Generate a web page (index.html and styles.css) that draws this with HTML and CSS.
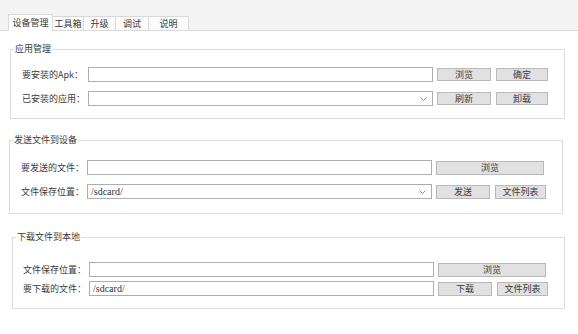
FILE: index.html
```html
<!DOCTYPE html>
<html lang="zh-CN">
<head>
    <meta charset="UTF-8">
    <title>ADB 工具</title>
    <link rel="stylesheet" href="styles.css">
</head>
<body>
    <div class="tabs">
        <div class="tab active tab-device">设备管理</div>
        <div class="tab tab-tools">工具箱</div>
        <div class="tab tab-up">升级</div>
        <div class="tab tab-debug">调试</div>
        <div class="tab tab-help">说明</div>
    </div>

    <div class="page">
        <div class="group g-app">
            <span class="group-title">应用管理</span>
            <div class="row">
                <span class="label">要安装的Apk：</span>
                <div class="field"></div>
                <button class="btn">浏览</button>
                <button class="btn btn-second">确定</button>
            </div>
            <div class="row">
                <span class="label">已安装的应用：</span>
                <div class="field combo">
                    <svg class="arrow" width="7" height="4" viewBox="0 0 7 4"><path d="M0.5 0.5 L3.5 3.5 L6.5 0.5" fill="none" stroke="#8a8a8a" stroke-width="1"/></svg>
                </div>
                <button class="btn">刷新</button>
                <button class="btn btn-second">卸载</button>
            </div>
        </div>

        <div class="group g-send">
            <span class="group-title">发送文件到设备</span>
            <div class="row">
                <span class="label">要发送的文件：</span>
                <div class="field"></div>
                <button class="btn btn-wide">浏览</button>
            </div>
            <div class="row">
                <span class="label">文件保存位置：</span>
                <div class="field combo">/sdcard/
                    <svg class="arrow" width="7" height="4" viewBox="0 0 7 4"><path d="M0.5 0.5 L3.5 3.5 L6.5 0.5" fill="none" stroke="#8a8a8a" stroke-width="1"/></svg>
                </div>
                <button class="btn">发送</button>
                <button class="btn btn-second btn-list">文件列表</button>
            </div>
        </div>

        <div class="group g-recv">
            <span class="group-title">下载文件到本地</span>
            <div class="row">
                <span class="label">文件保存位置：</span>
                <div class="field"></div>
                <button class="btn btn-wide">浏览</button>
            </div>
            <div class="row">
                <span class="label">要下载的文件：</span>
                <div class="field">/sdcard/</div>
                <button class="btn">下载</button>
                <button class="btn btn-second btn-list">文件列表</button>
            </div>
        </div>
    </div>
</body>
</html>
```

FILE: styles.css
```css
body {
    margin: 0;
    width: 578px;
    height: 334px;
    overflow: hidden;
    background: #fff;
    font-family: "Noto Sans CJK SC", sans-serif;
    font-size: 9px;
    color: #3a3a3a;
}
.tabs {
    display: flex;
    align-items: flex-end;
    height: 31px;
    padding-left: 8px;
    box-sizing: border-box;
    background: #f4f4f4;
    border-bottom: 1px solid #dadada;
}
.tab {
    height: 14px;
    line-height: 14px;
    text-align: center;
    background: #fbfbfb;
    border: 1px solid #d9d9d9;
    border-bottom: none;
    margin-left: -1px;
    box-sizing: border-box;
}
.tab.active {
    height: 17px;
    line-height: 16px;
    background: #fff;
    margin-left: 0;
    margin-bottom: -1px;
    position: relative;
}
.tab-device { width: 45px; }
.tab-tools { width: 32px; }
.tab-up { width: 33px; }
.tab-debug { width: 34px; }
.tab-help { width: 41px; }

.page {
    padding-left: 10px;
}

/* group boxes */
.group {
    position: relative;
    box-sizing: border-box;
    width: 555px;
    margin-top: 18px;
    padding: 17px 0 12px 11px;
    border: 1px solid #dcdcdc;
    display: flex;
    flex-direction: column;
    gap: 9px;
}
.group-title {
    position: absolute;
    top: -7px;
    left: 3px;
    padding: 0 1px;
    line-height: 12px;
    background: #fff;
}
.g-send {
    width: 554px;
    margin-top: 21px;
    margin-left: -1px;
    padding-top: 19px;
    padding-bottom: 14px;
}
.g-recv {
    width: 553px;
    margin-top: 23px;
    margin-left: 2px;
    padding: 24px 0 12px 10px;
    gap: 4px;
}

.row {
    display: flex;
    align-items: center;
    height: 15px;
}
.label {
    width: 66px;
    flex: none;
    white-space: nowrap;
}
.field {
    position: relative;
    width: 345px;
    height: 15px;
    flex: none;
    box-sizing: border-box;
    margin-right: 4px;
    padding-left: 3px;
    border: 1px solid #adadad;
    background: #fff;
    display: flex;
    align-items: center;
    font-family: "Liberation Serif", serif;
    font-size: 10px;
    color: #333;
}
.combo .arrow {
    position: absolute;
    right: 5px;
    top: 5px;
}
.btn {
    width: 54px;
    height: 13px;
    flex: none;
    box-sizing: border-box;
    padding: 0;
    border: 1px solid #b9b9b9;
    background: #e1e1e1;
    font-family: inherit;
    font-size: 9px;
    line-height: 11px;
    color: #3a3a3a;
}
.g-send .btn, .g-recv .btn {
    height: 14px;
}
.btn-second {
    width: 52px;
    margin-left: 5px;
}
.btn-list {
    width: 51px;
}
.btn-wide {
    width: 108px;
}
```
